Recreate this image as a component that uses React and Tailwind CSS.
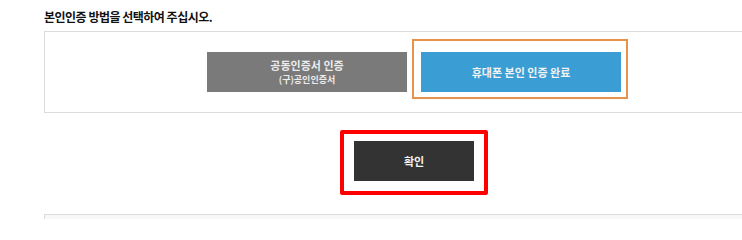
export default function App() {
  const font = { fontFamily: '"Noto Sans CJK KR", "Noto Sans", sans-serif' };
  return (
    <div className="w-[742px] h-[219px] overflow-hidden bg-white" style={font}>
      <div className="ml-[44px] w-[740px]">
        <p className="pt-[9px] text-[12px] font-bold leading-[16px] text-[#111] tracking-[-0.5px]">
          본인인증 방법을 선택하여 주십시오.
        </p>
        <div className="mt-[6px] border border-[#dcdcdc] py-[20px] flex justify-center gap-[14px]">
          <button className="w-[200px] h-[40px] bg-[#7a7a7a] text-[#ececec] font-bold flex flex-col items-center justify-center gap-[1px]">
            <span className="text-[11px] leading-[14px]">공동인증서 인증</span>
            <span className="text-[9px] leading-[13px]">(구)공인인증서</span>
          </button>
          <div className="relative">
            <button className="w-[200px] h-[40px] bg-[#3a9dd4] text-[#f2f2f2] text-[11px] font-bold flex items-center justify-center">
              휴대폰 본인 인증 완료
            </button>
            <div className="absolute left-[-9px] top-[-13px] w-[216px] h-[60px] border-2 border-[#e8914a] pointer-events-none"></div>
          </div>
        </div>
        <div className="mt-[28px] flex justify-center">
          <div className="relative">
            <button className="w-[120px] h-[40px] bg-[#333333] text-[#f2f2f2] text-[11px] font-bold flex items-center justify-center">
              확인
            </button>
            <div className="absolute left-[-14px] top-[-11px] w-[148px] h-[65px] border-4 border-[#ff0000] rounded-[2px] pointer-events-none"></div>
          </div>
        </div>
        <div className="mt-[33px] h-[40px] border border-[#dcdcdc] bg-[#f8f8f8]"></div>
      </div>
    </div>
  );
}
